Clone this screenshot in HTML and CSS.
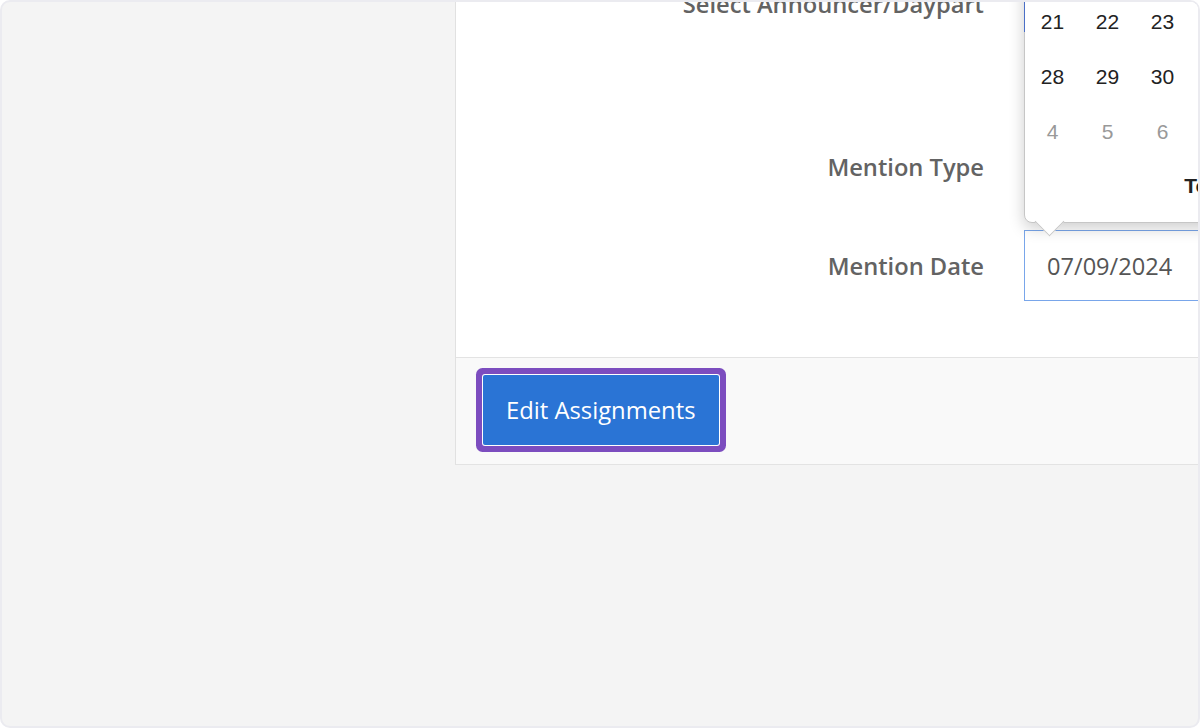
FILE: index.html
```html
<!DOCTYPE html>
<html lang="en">
<head>
<meta charset="utf-8">
<title>Edit Assignments</title>
<link rel="stylesheet" href="styles.css">
</head>
<body>
<div class="frame">
  <div class="layout">
    <aside class="sidebar"></aside>
    <main class="main">
      <section class="card">
        <div class="card-body">
          <div class="form-row form-row--announcer">
            <label class="form-label form-label--announcer">Select Announcer/Daypart</label>
            <div class="form-control form-control--focus"></div>
          </div>
          <div class="form-row">
            <label class="form-label">Mention Type</label>
            <div class="form-control"></div>
          </div>
          <div class="form-row">
            <label class="form-label">Mention Date</label>
            <div class="date-field">
              <div class="datepicker">
                <div class="dp-header">
                  <span class="dp-nav">‹</span>
                  <span class="dp-title">July 2024</span>
                  <span class="dp-nav">›</span>
                </div>
                <div class="dp-grid">
                  <span class="dp-dow">Su</span><span class="dp-dow">Mo</span><span class="dp-dow">Tu</span><span class="dp-dow">We</span><span class="dp-dow">Th</span><span class="dp-dow">Fr</span><span class="dp-dow">Sa</span>
                  <span class="dp-day dp-day--muted">30</span><span class="dp-day">1</span><span class="dp-day">2</span><span class="dp-day">3</span><span class="dp-day">4</span><span class="dp-day">5</span><span class="dp-day">6</span>
                  <span class="dp-day">7</span><span class="dp-day">8</span><span class="dp-day dp-day--selected">9</span><span class="dp-day">10</span><span class="dp-day">11</span><span class="dp-day">12</span><span class="dp-day">13</span>
                  <span class="dp-day">14</span><span class="dp-day">15</span><span class="dp-day">16</span><span class="dp-day">17</span><span class="dp-day">18</span><span class="dp-day">19</span><span class="dp-day">20</span>
                  <span class="dp-day">21</span><span class="dp-day">22</span><span class="dp-day">23</span><span class="dp-day">24</span><span class="dp-day">25</span><span class="dp-day">26</span><span class="dp-day">27</span>
                  <span class="dp-day">28</span><span class="dp-day">29</span><span class="dp-day">30</span><span class="dp-day">31</span><span class="dp-day dp-day--muted">1</span><span class="dp-day dp-day--muted">2</span><span class="dp-day dp-day--muted">3</span>
                  <span class="dp-day dp-day--muted">4</span><span class="dp-day dp-day--muted">5</span><span class="dp-day dp-day--muted">6</span><span class="dp-day dp-day--muted">7</span><span class="dp-day dp-day--muted">8</span><span class="dp-day dp-day--muted">9</span><span class="dp-day dp-day--muted">10</span>
                </div>
                <div class="dp-footer"><span class="dp-today">Today</span></div>
              </div>
              <div class="date-input">07/09/2024</div>
            </div>
          </div>
        </div>
        <div class="card-footer">
          <button class="btn-primary" type="button">Edit Assignments</button>
        </div>
      </section>
    </main>
  </div>
</div>
</body>
</html>
```

FILE: styles.css
```css
html, body {
  margin: 0;
  padding: 0;
  background: #ffffff;
}

.frame {
  box-sizing: border-box;
  width: 1200px;
  height: 728px;
  border: 2px solid #ebebf0;
  border-radius: 10px;
  background: #f4f4f4;
  overflow: hidden;
  font-family: "Open Sans", "Liberation Sans", sans-serif;
}

.layout {
  display: grid;
  grid-template-columns: 453px 1fr;
  min-width: 0;
}

.main {
  min-width: 0;
}

.card {
  width: 900px;
  margin-top: -80px;
  border-left: 1px solid #e1e1e1;
  border-bottom: 1px solid #e3e3e3;
  background: #ffffff;
}

.card-body {
  display: flex;
  flex-direction: column;
  gap: 28px;
  padding: 40px 0 56px;
}

.form-row {
  display: grid;
  grid-template-columns: 528px 400px;
  column-gap: 40px;
  align-items: center;
}

.form-row--announcer {
  padding-bottom: 70px;
}

.form-label {
  text-align: right;
  font-size: 23.7px;
  font-weight: 600;
  color: #636363;
  line-height: 32px;
}

.form-label--announcer {
  padding-top: 12px;
}

.form-control {
  box-sizing: border-box;
  height: 71px;
  border: 1px solid #cccccc;
  background: #ffffff;
}

.form-control--focus {
  border-color: #4a74cc;
}

.date-field {
  position: relative;
}

.date-input {
  box-sizing: border-box;
  height: 71px;
  border: 1px solid #79a6ea;
  background: #ffffff;
  padding: 0 22px;
  display: flex;
  align-items: center;
  font-size: 23.6px;
  color: #555555;
}

/* Date picker popup */
.datepicker {
  position: absolute;
  left: 0;
  bottom: calc(100% + 7px);
  z-index: 10;
  width: 385px;
  padding: 0 0 9px;
  background: #ffffff;
  border: 1px solid #c6c6c6;
  border-radius: 8px;
  box-shadow: 0 5px 16px rgba(0, 0, 0, 0.2);
  font-family: "Liberation Sans", Arial, sans-serif;
  color: #222222;
}

.datepicker::before {
  content: "";
  position: absolute;
  left: -1px;
  top: -1px;
  bottom: 190px;
  width: 1px;
  background: #4a6fc7;
}

.datepicker::after {
  content: "";
  position: absolute;
  left: 14px;
  bottom: -10px;
  width: 20px;
  height: 20px;
  background: #ffffff;
  border-right: 1px solid #c6c6c6;
  border-bottom: 1px solid #c6c6c6;
  transform: rotate(45deg);
}

.dp-header {
  display: flex;
  align-items: center;
  justify-content: space-between;
  height: 55px;
  padding: 0 18px;
  font-size: 21px;
  font-weight: 700;
}

.dp-nav {
  font-size: 28px;
}

.dp-grid {
  display: grid;
  grid-template-columns: repeat(7, 55px);
  grid-auto-rows: 55px;
}

.dp-dow,
.dp-day {
  display: flex;
  align-items: center;
  justify-content: center;
  font-size: 21px;
}

.dp-dow {
  font-weight: 700;
}

.dp-day--muted {
  color: #999999;
}

.dp-day--selected {
  background: #2a74d5;
  color: #ffffff;
  border-radius: 4px;
}

.dp-footer {
  display: flex;
  align-items: center;
  justify-content: center;
  height: 54px;
}

.dp-today {
  font-size: 21px;
  font-weight: 700;
  margin-right: 6px;
}

/* Footer */
.card-footer {
  border-top: 1px solid #e3e3e3;
  background: #f9f9f9;
  padding: 17px 27px 19px;
}

.btn-primary {
  box-sizing: border-box;
  height: 70px;
  padding: 0 23px;
  border: none;
  border-radius: 2px;
  background: #2a74d5;
  color: #ffffff;
  font-family: "Open Sans", "Liberation Sans", sans-serif;
  font-size: 23.8px;
  box-shadow: 0 0 0 1px #ffffff, 0 0 0 7px #7c4dbf;
  cursor: pointer;
}
```
